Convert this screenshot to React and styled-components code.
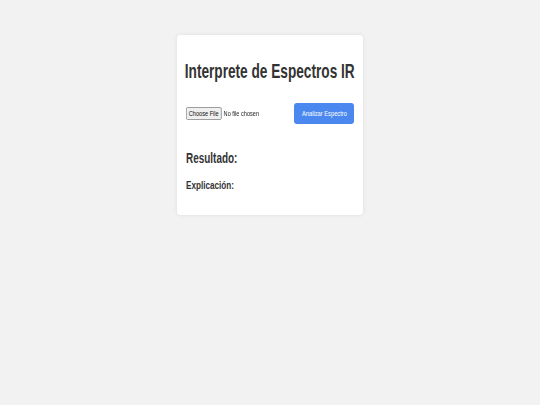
import styled, { createGlobalStyle } from "styled-components";

const GlobalStyle = createGlobalStyle`
  html, body {
    margin: 0;
    padding: 0;
    background: #f2f2f2;
    font-family: "Liberation Sans", Arial, sans-serif;
    color: #333;
  }
`;

const Page = styled.main`
  display: flex;
  justify-content: center;
  padding-top: 35px;
  min-height: 405px;
  box-sizing: border-box;
`;

const Card = styled.section`
  width: 186px;
  height: 180px;
  box-sizing: border-box;
  background: #fff;
  border-radius: 4px;
  box-shadow: 0 0 5px rgba(0, 0, 0, 0.08);
  padding: 0 9px;
  overflow: hidden;
`;

// the screenshot's font is a condensed grotesque, so squeeze Liberation Sans
const Narrow = styled.span`
  display: inline-block;
  flex-shrink: 0;
  white-space: nowrap;
  transform: scaleX(${(p) => p.$x});
  transform-origin: ${(p) => p.$origin || "left"} center;
`;

const Title = styled.h1`
  display: flex;
  justify-content: center;
  margin: 24px 0 0;
  font-size: 21px;
  line-height: 24px;
  font-weight: 700;
  color: #333;
`;

const UploadRow = styled.div`
  display: flex;
  justify-content: space-between;
  align-items: center;
  height: 21px;
  margin-top: 20px;
`;

const FileInput = styled.input`
  font-family: "Liberation Sans", Arial, sans-serif;
  font-size: 8px;
  color: #222;
  width: 124px;
  margin-right: -20px;
  flex-shrink: 0;
  transform: scaleX(0.7);
  transform-origin: left center;

  &::file-selector-button {
    font-family: inherit;
    font-size: 8px;
    padding: 1px 3px;
    margin-right: 3px;
    border: 1px solid #8f8f8f;
    border-radius: 2px;
    background: #efefef;
    color: #111;
  }
`;

const AnalyzeButton = styled.button`
  display: flex;
  justify-content: center;
  align-items: center;
  flex-shrink: 0;
  width: 60px;
  height: 21px;
  border: none;
  border-radius: 3px;
  background: #4a87ee;
  color: #fff;
  font-family: "Liberation Sans", Arial, sans-serif;
  font-size: 7px;
  padding: 0;
  cursor: pointer;
`;

const ResultHeading = styled.h2`
  margin: 26px 0 0;
  font-size: 14px;
  line-height: 17px;
  font-weight: 700;
  color: #333;
`;

const ExplainHeading = styled.h3`
  margin: 12px 0 0;
  font-size: 11px;
  line-height: 13px;
  font-weight: 700;
  color: #333;
`;

export default function App() {
  return (
    <>
      <GlobalStyle />
      <Page>
        <Card>
          <Title>
            <Narrow $x={0.65} $origin="center">
              Interprete de Espectros IR
            </Narrow>
          </Title>
          <UploadRow>
            <FileInput type="file" accept="image/*" />
            <AnalyzeButton>
              <Narrow $x={0.82} $origin="center">
                Analizar Espectro
              </Narrow>
            </AnalyzeButton>
          </UploadRow>
          <ResultHeading>
            <Narrow $x={0.71}>Resultado:</Narrow>
          </ResultHeading>
          <ExplainHeading>
            <Narrow $x={0.74}>Explicación:</Narrow>
          </ExplainHeading>
        </Card>
      </Page>
    </>
  );
}
